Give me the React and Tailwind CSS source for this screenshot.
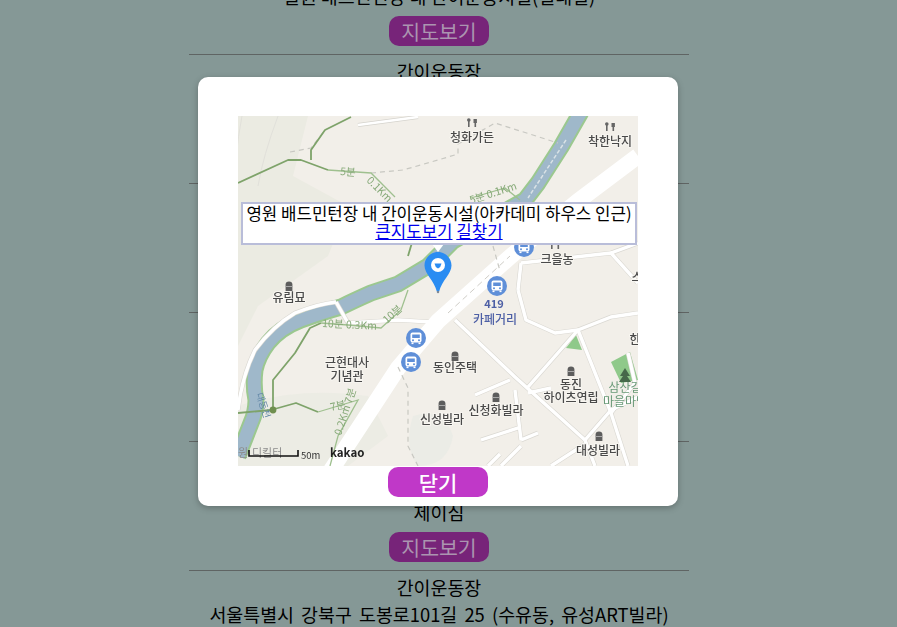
const fontStack = { fontFamily: '"Noto Sans CJK KR", "Noto Sans", sans-serif' };

const places = [
  { name: '간이운동장', address: '서울특별시 강북구 인수봉로 255', extra: '일원 배드민턴장 내 간이운동시설(일대일)' },
  { name: '간이운동장', address: '서울특별시 강북구 인수봉로 255', extra: '제이심' },
  { name: '간이운동장', address: '서울특별시 강북구 4.19로 85', extra: '제이심' },
  { name: '간이운동장', address: '서울특별시 강북구 삼양로 689', extra: '제이심' },
  { name: '간이운동장', address: '서울특별시 강북구 도봉로 89길', extra: '제이심' },
  { name: '간이운동장', address: '서울특별시 강북구 도봉로101길 25 (수유동, 유성ART빌라)', extra: '제이심' }
];

function MapButton({ children }) {
  return (
    <button className="h-[30px] w-[100px] rounded-[10px] bg-[#772479] text-[20.5px] leading-[30px] text-[#ab95b0]">
      {children}
    </button>
  );
}

function PlaceRow({ place }) {
  return (
    <div className="h-[129px] border-t border-[#5f6463] pt-[3px]">
      <div className="h-[27px] leading-[27px]">{place.name}</div>
      <div className="h-[27px] whitespace-nowrap leading-[27px] [word-spacing:3px]">{place.address}</div>
      <div className="h-[27px] whitespace-nowrap leading-[27px]">{place.extra}</div>
      <div className="flex justify-center pt-[6px]">
        <MapButton>지도보기</MapButton>
      </div>
    </div>
  );
}

function Poi({ x, y, kind = 'building' }) {
  if (kind === 'fork') {
    return (
      <g transform={`translate(${x} ${y})`} fill="#666">
        <rect x="-4" y="-4" width="1.6" height="8" />
        <rect x="1.5" y="-4" width="3.4" height="4" />
        <rect x="2.5" y="-1" width="1.6" height="5" />
        <circle cx="-3.2" cy="-3" r="1.8" />
      </g>
    );
  }
  return (
    <g transform={`translate(${x} ${y})`} fill="#5d5d5d">
      <path d="M-3.4 5 V-1.5 Q-3.4 -4.5 0 -4.5 Q3.4 -4.5 3.4 -1.5 V5 Z" />
      <rect x="-3.4" y="0" width="6.8" height="1" fill="#a8a8a8" />
    </g>
  );
}

function BusStop({ x, y }) {
  return (
    <g transform={`translate(${x} ${y})`}>
      <circle r="10" fill="#5f8fd8" />
      <rect x="-5.5" y="-5.5" width="11" height="10" rx="2" fill="#fff" />
      <rect x="-3.8" y="-3.5" width="7.6" height="3.5" fill="#5f8fd8" />
      <circle cx="-3" cy="2.2" r="1" fill="#5f8fd8" />
      <circle cx="3" cy="2.2" r="1" fill="#5f8fd8" />
      <rect x="-4.5" y="4.5" width="2" height="1.6" fill="#fff" />
      <rect x="2.5" y="4.5" width="2" height="1.6" fill="#fff" />
    </g>
  );
}

const mapLabels = [
  ['청화가든', 234, 26],
  ['착한낙지', 372, 30],
  ['크을농', 319, 148],
  ['유림묘', 51, 186],
  ['근현대사', 109, 251],
  ['기념관', 109, 265],
  ['동인주택', 217, 256],
  ['신성빌라', 204, 308],
  ['신청화빌라', 258, 299],
  ['동진', 333, 273],
  ['하이츠연립', 333, 286],
  ['대성빌라', 360, 339],
  ['한', 397, 228],
  ['스', 399, 166]
];

const streets = [
  'M217 204 L277 261 L347 324 L373 294 L400 281',
  'M290 271 L340 214 L373 201 L400 197',
  'M280 174 L288 204 L317 217 L340 214',
  'M340 214 L373 297 L390 350',
  'M237 279 L272 264',
  'M277 274 L283 324 M243 324 L283 311 M283 324 L300 317',
  'M290 277 L313 272',
  'M347 324 L357 350 M313 350 L347 328 M263 350 L283 330',
  'M390 237 L397 267 L373 297',
  'M283 147 L373 137 L400 167 M373 137 L400 127 M280 174 L283 147',
  'M98 186 L110 207 L160 204 L193 206',
  'M0 294 Q4 260 17 234 Q35 210 57 197 Q80 188 98 186',
  'M250 350 L262 338'
];

const river =
  'M343 -4 L323 31 L300 67 L287 84 L215 125 L190 150 L160 168 L133 177 Q115 185 103 191 Q85 196 63 204 Q42 212 30 227 Q20 240 17 254 Q15 270 18 284 Q18 296 13 307 Q8 320 0 340';

function KakaoMap() {
  return (
    <svg
      viewBox="0 0 400 350"
      className="block h-[350px] w-[400px] blur-[0.5px]"
      style={fontStack}
    >
      <rect width="400" height="350" fill="#f2efe9" />
      <path d="M0 0 H70 L55 60 L110 90 L90 140 L20 190 L0 230 Z" fill="#ebebe2" />
      <path d="M0 290 Q60 270 130 280 L150 320 L110 350 H0 Z" fill="#ecece4" />
      <path d="M175 300 Q205 290 215 320 Q210 350 180 350 Q165 330 175 300" fill="#ebece6" />
      <path d="M4 0 Q-4 40 -4 90 M40 0 Q25 40 20 70" stroke="#e1e0da" fill="none" />

      {/* parks */}
      <path d="M328 232 L338 219 L344 234 Z" fill="#8fc98a" />
      <path d="M373 246 L392 236 L400 264 L383 267 Z" fill="#8fc98a" />

      {/* river */}
      <path d={river} fill="none" stroke="#9bc88f" strokeWidth="17" strokeLinejoin="round" />
      <path d={river} fill="none" stroke="#9fb8ca" strokeWidth="13" strokeLinejoin="round" />
      <path d="M328 24 L290 82" stroke="#d9e2e6" strokeWidth="1.5" strokeDasharray="4 2" fill="none" />

      {/* streets */}
      {streets.map((d) => (
        <path key={d} d={d} fill="none" stroke="#dad8d2" strokeWidth="4.6" strokeLinejoin="round" />
      ))}
      {streets.map((d) => (
        <path key={d} d={d} fill="none" stroke="#fff" strokeWidth="3.4" strokeLinejoin="round" />
      ))}
      <path d="M120 9 L180 1" stroke="#d5d3cd" strokeWidth="4" />
      <path d="M120 9 L180 1" stroke="#fff" strokeWidth="2.6" />
      <path d="M88 362 L160 252 L200 205 L273 140 L340 85 L400 40" fill="none" stroke="#fff" strokeWidth="16" />
      <path d="M210 197 L272 140" fill="none" stroke="#cfcdc7" strokeWidth="1" strokeDasharray="6 4" />

      {/* paths */}
      <g fill="none" stroke="#c8c8c2" strokeWidth="1.2" strokeDasharray="5 4">
        <path d="M52 36 L73 32 L87 14" />
        <path d="M133 57 L165 54 L200 44 L220 38 L220 28 L257 7 L320 27" />
        <path d="M160 251 L170 272 L170 330 L180 350" />
        <path d="M255 130 L262 155" />
      </g>

      {/* trails */}
      <g fill="none" stroke="#7ea36a" strokeWidth="1.8" strokeLinejoin="round">
        <path d="M0 67 L50 44 L63 44 L90 54" />
        <path d="M73 44 L73 34 L87 14 L113 1" />
        <path d="M0 297 L33 294 L58 287 L80 296" />
        <path d="M35 294 L35 264 L57 237 L72 212 L83 207" />
        <path d="M170 140 L176 120" />
      </g>
      <g fill="none" stroke="#9fc08f" strokeWidth="1.3">
        <path d="M90 54 L133 57 L157 81" />
        <path d="M233 82 L267 72 L282 84" />
        <path d="M83 207 L110 209 L143 212 L163 194 L170 174" />
        <path d="M80 296 L120 284 L100 320 L92 350" />
      </g>
      <circle cx="35" cy="294" r="3.4" fill="#6f8f4f" />

      <g fill="#86a978" fontSize="10.5">
        <text x="102" y="59" transform="rotate(4 102 59)">5분</text>
        <text x="128" y="65" transform="rotate(45 128 65)">0.1Km</text>
        <text x="150" y="92" transform="rotate(45 150 92)">5분</text>
        <text x="233" y="88" transform="rotate(-18 233 88)">5분 0.1Km</text>
        <text x="84" y="211" transform="rotate(3 84 211)">10분 0.3Km</text>
        <text x="149" y="208" transform="rotate(-42 149 208)">10분</text>
        <text x="93" y="295" transform="rotate(-12 93 295)">7분</text>
        <text x="103" y="320" transform="rotate(-72 103 320)">0.2Km 7분</text>
      </g>

      {mapLabels.map(([text, x, y]) => (
        <text
          key={text}
          x={x}
          y={y}
          textAnchor="middle"
          fontSize="12"
          fontWeight="500"
          fill="#4a4a4a"
          stroke="#f7f5f0"
          strokeWidth="2"
          paintOrder="stroke"
        >
          {text}
        </text>
      ))}
      <text x="387" y="276" textAnchor="middle" fontSize="12" fill="#6a9a78">삼산길</text>
      <text x="387" y="290" textAnchor="middle" fontSize="12" fill="#6a9a78">마을마당</text>
      <text x="18" y="278" fontSize="9.5" fill="#5f85a5" transform="rotate(72 18 278)">대동천</text>
      <text x="256" y="192" textAnchor="middle" fontSize="11" fontWeight="700" fill="#4d5fa5">419</text>
      <text x="257" y="208" textAnchor="middle" fontSize="12" fontWeight="500" fill="#4d5fa5">카페거리</text>

      <Poi x={234} y={7} kind="fork" />
      <Poi x={372} y={11} kind="fork" />
      <Poi x={317} y={129} kind="fork" />
      <Poi x={51} y={170} />
      <Poi x={217} y={240} />
      <Poi x={204} y={289} />
      <Poi x={258} y={281} />
      <Poi x={333} y={255} />
      <Poi x={361} y={320} />
      <path d="M387 252 L382 260 H385 L381 266 H393 L389 260 H392 Z" fill="#46694a" />

      <BusStop x={178} y={222} />
      <BusStop x={173} y={246} />
      <BusStop x={259} y={170} />
      <BusStop x={286} y={131} />

      {/* info window tail */}
      <path d="M194 128 H206 L200 136 Z" fill="#fff" />

      {/* marker */}
      <path
        d="M200 136 C192.5 136 186.5 142 186.5 149.5 C186.5 158 196 164 199 176 H201 C204 164 213.5 158 213.5 149.5 C213.5 142 207.5 136 200 136 Z"
        fill="#2a8cf2"
      />
      <circle cx="200" cy="176" r="1.2" fill="#7f8a96" />
      <circle cx="200" cy="149" r="7" fill="#fff" />
      <path d="M196.5 147.5 H203.5 Q203 151 200 152.5 Q197 151 196.5 147.5 Z" fill="#2a8cf2" />

      {/* scale */}
      <text x="0" y="341" fontSize="11" fill="#8c8c8c">원</text>
      <text x="14" y="341" fontSize="11" fill="#8c8c8c">디킬터</text>
      <path d="M11 334 V340 H60 V334" fill="none" stroke="#111" strokeWidth="1.6" />
      <text x="63" y="343" fontSize="9.5" fill="#333">50m</text>
      <text x="92" y="341" fontSize="11.5" fontWeight="700" fill="#222">kakao</text>
    </svg>
  );
}

function MapDialog() {
  return (
    <div className="absolute left-[198px] top-[77px] h-[429px] w-[480px] rounded-[10px] bg-white pt-[39px] shadow-[0_2px_6px_rgba(0,0,0,0.25)]">
      <div className="relative mx-auto h-[350px] w-[400px] overflow-hidden">
        <KakaoMap />
        <div className="absolute left-[3px] top-[86px] h-[43px] w-[396px] border-2 border-[#b9bdd9] bg-white text-center text-[16.8px] leading-[18px] text-black">
          <div>영원 배드민턴장 내 간이운동시설(아카데미 하우스 인근)</div>
          <div>
            <a href="#map" className="text-[#0000ee] underline">큰지도보기</a>{' '}
            <a href="#route" className="text-[#0000ee] underline">길찾기</a>
          </div>
        </div>
      </div>
      <div className="flex justify-center pt-px">
        <button className="h-[30px] w-[100px] rounded-[10px] bg-[#c038c8] text-[21px] font-medium leading-[30px] text-white">
          닫기
        </button>
      </div>
    </div>
  );
}

export default function App() {
  return (
    <div className="relative h-[627px] w-full overflow-hidden bg-[#859896] text-black" style={fontStack}>
      <div className="ml-[189px] mt-[-75px] w-[500px] text-center text-[18.4px]">
        {places.map((place, i) => (
          <PlaceRow key={i} place={place} />
        ))}
      </div>
      <MapDialog />
    </div>
  );
}
